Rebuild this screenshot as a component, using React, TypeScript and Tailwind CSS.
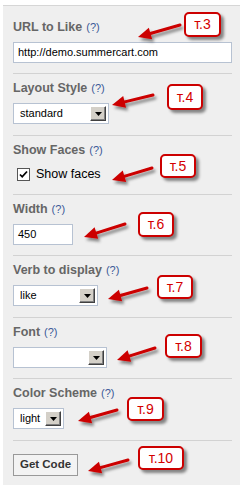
import React from 'react';

const FONT = "font-['Liberation_Sans',Arial,sans-serif]";

// callout boxes and arrows drawn on top of the form (page coordinates)
const callouts = [
  { text: 'т.3', box: [184, 7, 37, 25], tail: [180, 20], tip: [138, 32] },
  { text: 'т.4', box: [167, 79, 36, 26], tail: [153, 90], tip: [112, 100] },
  { text: 'т.5', box: [160, 149, 36, 24], tail: [152, 163], tip: [112, 175] },
  { text: 'т.6', box: [138, 207, 36, 25], tail: [125, 219], tip: [84, 232] },
  { text: 'т.7', box: [157, 270, 36, 24], tail: [147, 283], tip: [108, 294] },
  { text: 'т.8', box: [165, 329, 37, 24], tail: [155, 343], tip: [117, 355] },
  { text: 'т.9', box: [127, 392, 37, 24], tail: [117, 405], tip: [78, 416] },
  { text: 'т.10', box: [138, 441, 46, 24], tail: [128, 455], tip: [88, 466] },
];

const Help = () => <span className="ml-[4px] text-[11px] font-normal text-[#3b5998]">(?)</span>;

const Label = ({ children }: { children: React.ReactNode }) => (
  <div className="h-[16px] leading-[16px] mb-[7px] text-[12.5px] font-bold text-[#666666]">
    {children}
    <Help />
  </div>
);

const Section = ({ children, pt = 'pt-[6px]', pb = 'pb-[10px]', last }: { children: React.ReactNode; pt?: string; pb?: string; last?: boolean }) => (
  <div className={`${pt} ${pb} ${last ? '' : 'border-b border-[#d2d2d2]'}`}>
    {children}
  </div>
);

const Select = ({ value, width }: { value: string; width: string }) => (
  <div className={`${width} h-[21px] bg-white border border-[#b7c2d2] flex items-center justify-between pl-[6px] pr-[2px]`}>
    <span className="text-[11px] text-black leading-none">{value}</span>
    <span className="w-[16px] h-[15px] bg-[#d4d0c8] border-t border-l border-t-white border-l-white border-b border-r border-b-[#404040] border-r-[#404040] flex items-center justify-center shadow-[inset_-1px_-1px_0_#808080]">
      <svg width="7" height="4" viewBox="0 0 7 4"><path d="M0 0h7L3.5 4z" fill="#000" /></svg>
    </span>
  </div>
);

const TextInput = ({ value, width }: { value: string; width: string }) => (
  <div className={`${width} h-[21px] bg-white border border-[#b7c2d2] flex items-center pl-[4px] text-[11px] text-black`}>
    {value}
  </div>
);

const Arrow = ({ tail, tip }: { tail: number[]; tip: number[] }) => {
  const dx = tip[0] - tail[0];
  const dy = tip[1] - tail[1];
  const len = Math.hypot(dx, dy);
  const ux = dx / len;
  const uy = dy / len;
  const headLen = 13;
  const half = 6;
  const bx = tip[0] - ux * headLen;
  const by = tip[1] - uy * headLen;
  const pts = [
    `${tip[0]},${tip[1]}`,
    `${bx - uy * half},${by + ux * half}`,
    `${bx + uy * half},${by - ux * half}`,
  ].join(' ');
  return (
    <g filter="url(#shadow)">
      <line x1={tail[0]} y1={tail[1]} x2={bx + ux * 2} y2={by + uy * 2} stroke="#cc0000" strokeWidth="3" strokeLinecap="round" />
      <polygon points={pts} fill="#cc0000" />
    </g>
  );
};

export default function App() {
  return (
    <div className={`relative w-[247px] h-[490px] bg-white ${FONT}`}>
      <div className="ml-[3px] mt-[5px] w-[237px] bg-[#efefef] border-t border-[#d6d6d6] pl-[10px] pr-[8px]">
        <Section pt="pt-[13px]">
          <Label>URL to Like</Label>
          <TextInput value="http://demo.summercart.com" width="w-[219px]" />
        </Section>
        <Section pb="pb-[11px]">
          <Label>Layout Style</Label>
          <Select value="standard" width="w-[96px]" />
        </Section>
        <Section>
          <Label>Show Faces</Label>
          <div className="h-[19px] flex items-center pl-[4px] gap-[6px]">
            <span className="w-[13px] h-[13px] bg-white border border-[#555555] flex items-center justify-center">
              <svg width="9" height="9" viewBox="0 0 9 9">
                <path d="M1 4.5l2.2 2.3L8 1.5" stroke="#000" strokeWidth="1.8" fill="none" />
              </svg>
            </span>
            <span className="text-[12.5px] text-black">Show faces</span>
          </div>
        </Section>
        <Section>
          <Label>Width</Label>
          <TextInput value="450" width="w-[60px]" />
        </Section>
        <Section pb="pb-[11px]">
          <Label>Verb to display</Label>
          <Select value="like" width="w-[85px]" />
        </Section>
        <Section>
          <Label>Font</Label>
          <Select value="" width="w-[94px]" />
        </Section>
        <Section pb="pb-[11px]">
          <Label>Color Scheme</Label>
          <Select value="light" width="w-[51px]" />
        </Section>
        <Section pt="pt-[13px]" pb="pb-[9px]" last>
          <button className="w-[65px] h-[22px] bg-[#f3f3f3] border border-[#999999] text-[11.5px] font-bold text-[#333333] flex items-center justify-center">
            Get Code
          </button>
        </Section>
      </div>

      <svg className="absolute inset-0 pointer-events-none" width="247" height="490">
        <defs>
          <filter id="shadow" x="-30%" y="-30%" width="160%" height="180%">
            <feDropShadow dx="2" dy="3" stdDeviation="1.5" floodColor="#000" floodOpacity="0.45" />
          </filter>
        </defs>
        {callouts.map((c) => (
          <Arrow key={c.text} tail={c.tail} tip={c.tip} />
        ))}
      </svg>

      {callouts.map((c) => (
        <div
          key={c.text}
          className="absolute bg-white border-2 border-[#cc0000] rounded-[5px] shadow-[3px_3px_3px_rgba(0,0,0,0.45)] flex items-center justify-center text-[14px] text-[#d40000]"
          style={{ left: c.box[0], top: c.box[1], width: c.box[2], height: c.box[3] }}
        >
          {c.text}
        </div>
      ))}
    </div>
  );
}
